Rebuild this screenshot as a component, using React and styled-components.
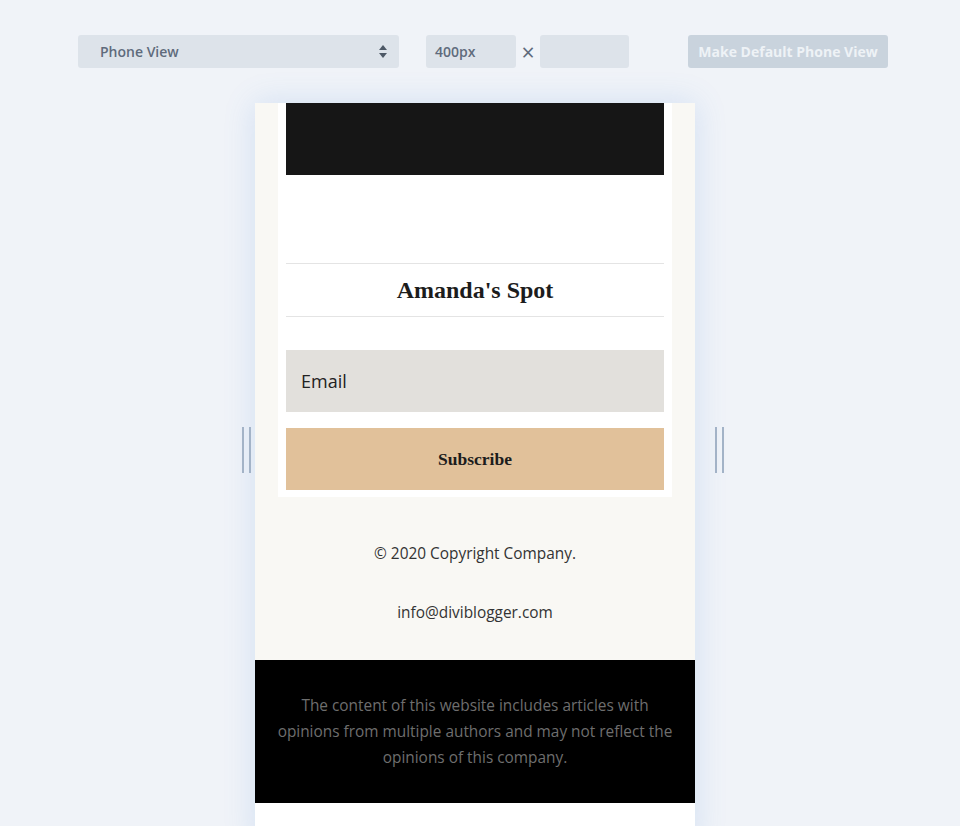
import React from "react";
import styled, { createGlobalStyle } from "styled-components";

const Global = createGlobalStyle`
  html, body {
    margin: 0;
    padding: 0;
    background: #f0f3f8;
    font-family: "Open Sans", "Liberation Sans", sans-serif;
  }
  * { box-sizing: border-box; }
`;

const Page = styled.div`
  height: 826px;
  overflow: hidden;
  padding-top: 35px;
`;

const Toolbar = styled.div`
  display: flex;
  align-items: center;
  padding-left: 78px;
  height: 33px;
`;

const Select = styled.div`
  width: 321px;
  height: 33px;
  border-radius: 3px;
  background: #dde3ea;
  display: flex;
  align-items: center;
  justify-content: space-between;
  padding: 0 12px 0 22px;
  font-size: 14px;
  font-weight: 600;
  color: #5f6b7c;
`;

const Field = styled.div`
  width: ${p => p.w}px;
  height: 33px;
  border-radius: 3px;
  background: #dde3ea;
  display: flex;
  align-items: center;
  padding-left: 9px;
  font-size: 14px;
  font-weight: 600;
  color: #5f6b7c;
  margin-left: ${p => p.ml || 0}px;
`;

const Times = styled.span`
  width: 24px;
  text-align: center;
  font-size: 23px;
  color: #5f6b7c;
  line-height: 1;
  padding-top: 2px;
`;

const DefaultButton = styled.div`
  margin-left: 59px;
  width: 200px;
  height: 33px;
  border-radius: 3px;
  background: #c9d3dd;
  color: #eef2f6;
  font-size: 14px;
  font-weight: 700;
  display: flex;
  align-items: center;
  justify-content: center;
`;

const Stage = styled.div`
  position: relative;
  margin-top: 35px;
`;

const Frame = styled.div`
  width: 440px;
  margin-left: 255px;
  background: #f9f8f4;
  box-shadow: 0 0 30px rgba(70, 140, 220, 0.18);
  min-height: 723px;
`;

const Handle = styled.div`
  position: absolute;
  top: 324px;
  left: ${p => p.x}px;
  width: 9px;
  height: 46px;
  border-left: 2px solid #a3b3c7;
  border-right: 2px solid #a3b3c7;
`;

const Card = styled.div`
  margin: 0 23px;
  background: #fff;
  padding: 0 8px 7px;
`;

const Hero = styled.div`
  height: 72px;
  background: #161616;
`;

const Spacer = styled.div`
  height: ${p => p.h}px;
`;

const Title = styled.h2`
  margin: 0;
  border-top: 1px solid #e4e4e4;
  border-bottom: 1px solid #e4e4e4;
  height: 54px;
  display: flex;
  align-items: center;
  justify-content: center;
  font-family: "Liberation Serif", "DejaVu Serif", serif;
  font-size: 24px;
  font-weight: 700;
  color: #1c1c1c;
`;

const Email = styled.div`
  height: 62px;
  background: #e2e0dc;
  display: flex;
  align-items: center;
  padding-left: 15px;
  font-size: 18px;
  color: #222;
`;

const Subscribe = styled.div`
  margin-top: 16px;
  height: 62px;
  background: #e1c19a;
  display: flex;
  align-items: center;
  justify-content: center;
  font-family: "Liberation Serif", "DejaVu Serif", serif;
  font-size: 17.5px;
  font-weight: 700;
  color: #1c1c1c;
`;

const Footer = styled.div`
  padding: 44px 0 34px;
  text-align: center;
  font-size: 15.4px;
  color: #333;
`;

const FooterLine = styled.p`
  margin: 0 0 33px;
  line-height: 26px;
  &:last-child { margin-bottom: 0; }
`;

const Disclaimer = styled.div`
  background: #000;
  height: 143px;
  padding: 33px 20px 0;
  text-align: center;
  font-size: 15.4px;
  line-height: 26px;
  color: #6e6e6e;
`;

const Blank = styled.div`
  background: #fff;
  height: 40px;
`;

function SortArrows() {
  return (
    <svg width="8" height="13" viewBox="0 0 8 13">
      <path d="M4 0 L8 5 L0 5 Z" fill="#4d5866" />
      <path d="M4 13 L8 8 L0 8 Z" fill="#4d5866" />
    </svg>
  );
}

export default function App() {
  return (
    <Page>
      <Global />
      <Toolbar>
        <Select>
          <span>Phone View</span>
          <SortArrows />
        </Select>
        <Field w={90} ml={27}>400px</Field>
        <Times>×</Times>
        <Field w={89} />
        <DefaultButton>Make Default Phone View</DefaultButton>
      </Toolbar>

      <Stage>
        <Handle x={242} />
        <Handle x={715} />
        <Frame>
          <Card>
            <Hero />
            <Spacer h={88} />
            <Title>Amanda's Spot</Title>
            <Spacer h={33} />
            <Email>Email</Email>
            <Subscribe>Subscribe</Subscribe>
          </Card>
          <Footer>
            <FooterLine>© 2020 Copyright Company.</FooterLine>
            <FooterLine>info@diviblogger.com</FooterLine>
          </Footer>
          <Disclaimer>
            The content of this website includes articles with opinions from multiple authors and may not reflect the opinions of this company.
          </Disclaimer>
          <Blank />
        </Frame>
      </Stage>
    </Page>
  );
}
